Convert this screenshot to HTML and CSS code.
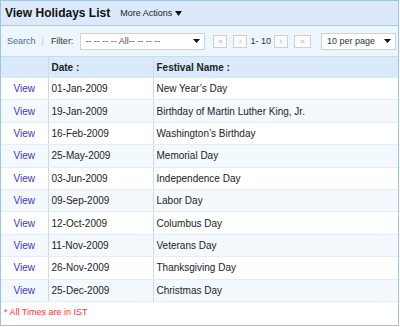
FILE: index.html
```html
<!DOCTYPE html>
<html>
<head>
<meta charset="utf-8">
<link rel="stylesheet" href="styles.css">
</head>
<body>
<div class="panel">
  <div class="head">
    <span class="title">View Holidays List</span>
    <span class="more">More Actions <svg class="caret" width="7" height="5" viewBox="0 0 7 5"><polygon points="0,0 7,0 3.5,5" fill="#111"/></svg></span>
  </div>
  <div class="toolbar">
    <a class="search">Search</a>
    <span class="sep">|</span>
    <span class="filter">Filter:</span>
    <div class="select filter-select"><span>-- -- -- -- All-- -- -- --</span><svg width="7" height="4" viewBox="0 0 7 4"><polygon points="0,0 7,0 3.5,4" fill="#111"/></svg></div>
    <div class="pager">
      <span class="pbtn">&laquo;</span>
      <span class="pbtn">&lsaquo;</span>
      <span class="range">1- 10</span>
      <span class="pbtn">&rsaquo;</span>
      <span class="pbtn wide">&raquo;</span>
    </div>
    <div class="select per-page"><span>10 per page</span><svg width="7" height="4" viewBox="0 0 7 4"><polygon points="0,0 7,0 3.5,4" fill="#111"/></svg></div>
  </div>
  <table class="grid">
    <colgroup><col class="c1"><col class="c2"><col class="c3"></colgroup>
    <thead>
      <tr><th></th><th>Date :</th><th>Festival Name :</th></tr>
    </thead>
    <tbody>
      <tr><td class="v"><a>View</a></td><td>01-Jan-2009</td><td>New Year’s Day</td></tr>
      <tr><td class="v"><a>View</a></td><td>19-Jan-2009</td><td>Birthday of Martin Luther King, Jr.</td></tr>
      <tr><td class="v"><a>View</a></td><td>16-Feb-2009</td><td>Washington’s Birthday</td></tr>
      <tr><td class="v"><a>View</a></td><td>25-May-2009</td><td>Memorial Day</td></tr>
      <tr><td class="v"><a>View</a></td><td>03-Jun-2009</td><td>Independence Day</td></tr>
      <tr><td class="v"><a>View</a></td><td>09-Sep-2009</td><td>Labor Day</td></tr>
      <tr><td class="v"><a>View</a></td><td>12-Oct-2009</td><td>Columbus Day</td></tr>
      <tr><td class="v"><a>View</a></td><td>11-Nov-2009</td><td>Veterans Day</td></tr>
      <tr><td class="v"><a>View</a></td><td>26-Nov-2009</td><td>Thanksgiving Day</td></tr>
      <tr><td class="v"><a>View</a></td><td>25-Dec-2009</td><td>Christmas Day</td></tr>
    </tbody>
  </table>
  <div class="note">* All Times are in IST</div>
</div>
</body>
</html>
```

FILE: styles.css
```css
html, body {
  margin: 0;
  padding: 0;
  background: #fff;
}
body {
  font-family: "Liberation Sans", Arial, sans-serif;
  color: #222;
}
.panel {
  box-sizing: border-box;
  width: 399px;
  height: 326px;
  border: 1px solid #9ec3e7;
  display: flex;
  flex-direction: column;
}
.head {
  height: 24px;
  background: #dbe9fa;
  border-bottom: 1px solid #a8caea;
  display: flex;
  align-items: center;
  padding-left: 4px;
}
.title {
  font-weight: bold;
  font-size: 12px;
  color: #111;
}
.more {
  margin-left: 10px;
  font-size: 9px;
  color: #222;
  display: flex;
  align-items: center;
}
.caret {
  margin-left: 3px;
}
.toolbar {
  height: 30px;
  background: #edf5fd;
  display: flex;
  align-items: center;
  padding-left: 6px;
  font-size: 9px;
}
.search {
  color: #4a6d9e;
}
.sep {
  color: #c0c8d0;
  margin-left: 6px;
}
.filter {
  margin-left: 7px;
  color: #333;
}
.select {
  box-sizing: border-box;
  height: 17px;
  background: #fff;
  border: 1px solid #cfd3d8;
  display: flex;
  align-items: center;
  justify-content: space-between;
  padding: 0 4px 0 4px;
  color: #333;
  font-size: 9px;
}
.filter-select {
  width: 125px;
  margin-left: 7px;
  color: #555;
}
.pager {
  display: flex;
  align-items: center;
  margin-left: 8px;
}
.pbtn {
  box-sizing: border-box;
  width: 14px;
  height: 13px;
  border: 1px solid #d0d0d0;
  background: #fafafa;
  color: #b8b8b8;
  font-size: 8px;
  display: flex;
  align-items: center;
  justify-content: center;
  margin-right: 6px;
}
.pbtn.wide {
  width: 17px;
  margin-right: 0;
}
.range {
  color: #333;
  margin-right: 3px;
  margin-left: -3px;
}
.per-page {
  width: 75px;
  height: 17px;
  margin-left: 10px;
  padding-left: 5px;
}
.grid {
  border-collapse: collapse;
  width: 100%;
  table-layout: fixed;
  font-size: 10px;
}
.c1 { width: 47px; }
.c2 { width: 105px; }
.grid th {
  height: 21px;
  background: #dbeafb;
  text-align: left;
  font-weight: bold;
  color: #222;
  padding: 0 0 0 3px;
  border-top: 1px solid #c7dcf2;
  border-left: 1px solid #c7dcf2;
}
.grid th:first-child, .grid td:first-child {
  border-left: none;
}
.grid td {
  height: 21.4px;
  padding: 0 0 0 3px;
  border-left: 1px solid #c7dcf2;
  border-bottom: 1px solid #e2edf9;
  color: #222;
}
.grid tbody tr:nth-child(even) td {
  background: #f4f9fe;
}
.grid td.v {
  text-align: center;
  padding: 0;
}
.grid td.v a {
  color: #4036bd;
}
.note {
  flex: 1;
  display: flex;
  align-items: center;
  padding-left: 3px;
  padding-bottom: 2px;
  font-size: 9px;
  color: #ff3434;
}
```
